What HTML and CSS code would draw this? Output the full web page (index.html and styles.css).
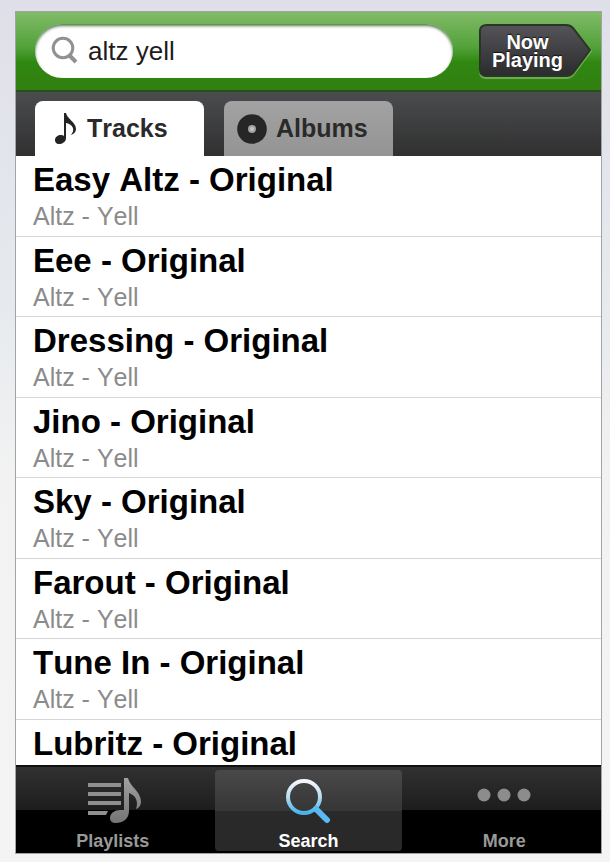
FILE: index.html
```html
<!DOCTYPE html>
<html lang="en">
<head>
  <meta charset="UTF-8">
  <meta name="viewport" content="width=device-width, initial-scale=1.0">
  <title>Search</title>
  <link rel="stylesheet" href="styles.css">
</head>
<body>
  <div class="phone">
    <header class="search-bar">
      <label class="search-box">
        <svg class="search-icon" width="28" height="30" viewBox="0 0 28 30" aria-hidden="true">
          <circle cx="12" cy="12" r="9.8" fill="none" stroke="#919191" stroke-width="3"/>
          <path d="M18.5 19.5L25 26" stroke="#919191" stroke-width="4"/>
        </svg>
        <input class="search-input" type="text" value="altz yell" aria-label="Search music">
      </label>
      <button class="now-playing" type="button">
        <svg class="now-shape" width="115" height="56" viewBox="0 0 115 56" aria-hidden="true">
          <defs>
            <linearGradient id="arrowFill" x1="0" y1="0" x2="0" y2="1">
              <stop offset="0" stop-color="#555459"/>
              <stop offset="1" stop-color="#2b2b2d"/>
            </linearGradient>
          </defs>
          <path d="M8 2H88Q93 2 96 5L113 27L96 50Q93 54 88 54H8Q2 54 2 48V8Q2 2 8 2Z" fill="none" stroke="#83bd6b" stroke-opacity=".7" stroke-width="2"/>
          <path d="M9 1H88Q92 1 95 4L112 26L95 49Q92 52 88 52H9Q2 52 2 46V7Q2 1 9 1Z" fill="url(#arrowFill)" stroke="#293626" stroke-width="2"/>
        </svg>
        <span class="now-text">Now<br>Playing</span>
      </button>
    </header>

    <div class="tabs">
      <button class="tab tab-active" type="button">
        <svg width="24" height="34" viewBox="0 0 24 34" aria-hidden="true">
          <path d="M10 1H12C13 7 22 10 22 17C22 20 20 22 17 23C22 17 18 12 12 11V26C12 30 8 32 5 32C2 32 1 30 1 28C1 25 4 23 7 23C8 23 9 23 10 24Z" fill="#242424"/>
        </svg>
        <span>Tracks</span>
      </button>
      <button class="tab" type="button">
        <svg width="30" height="30" viewBox="0 0 30 30" aria-hidden="true">
          <circle cx="15" cy="15" r="14.8" fill="#262626"/>
          <circle cx="15" cy="15" r="4" fill="#a2a2a2"/>
          <circle cx="15" cy="15" r="2" fill="#c4c4c4"/>
        </svg>
        <span>Albums</span>
      </button>
    </div>

    <ul class="tracks">
      <li class="track"><div class="title">Easy Altz - Original</div><div class="artist">Altz - Yell</div></li>
      <li class="track"><div class="title">Eee - Original</div><div class="artist">Altz - Yell</div></li>
      <li class="track"><div class="title">Dressing - Original</div><div class="artist">Altz - Yell</div></li>
      <li class="track"><div class="title">Jino - Original</div><div class="artist">Altz - Yell</div></li>
      <li class="track"><div class="title">Sky - Original</div><div class="artist">Altz - Yell</div></li>
      <li class="track"><div class="title">Farout - Original</div><div class="artist">Altz - Yell</div></li>
      <li class="track"><div class="title">Tune In - Original</div><div class="artist">Altz - Yell</div></li>
      <li class="track"><div class="title">Lubritz - Original</div></li>
    </ul>

    <nav class="nav">
      <button class="nav-item" type="button">
        <svg width="56" height="46" viewBox="0 0 56 46" aria-hidden="true">
          <defs>
            <linearGradient id="grayFill" x1="0" y1="0" x2="0" y2="1">
              <stop offset="0" stop-color="#a0a0a0"/>
              <stop offset="1" stop-color="#747474"/>
            </linearGradient>
          </defs>
          <path d="M3 5H36V9H3ZM3 14H36V18H3ZM3 23H36V27H3ZM3 33H23L21 37H3Z" fill="#8f8f8f"/>
          <path d="M39 0H43C45 9 56 13 56 24C56 27 54 30 51 31C54 23 50 17 44 15V33C44 41 38 45 31 45C27 45 25 43 25 40C25 35 30 32 35 32C37 32 38 32 39 32Z" fill="url(#grayFill)"/>
        </svg>
        <span>Playlists</span>
      </button>
      <button class="nav-item nav-active" type="button">
        <svg width="48" height="46" viewBox="0 0 48 46" aria-hidden="true">
          <defs>
            <linearGradient id="lensStroke" x1="0" y1="0" x2="0" y2="1">
              <stop offset="0" stop-color="#f4f7fb"/>
              <stop offset=".5" stop-color="#b9dcf1"/>
              <stop offset="1" stop-color="#45b4ea"/>
            </linearGradient>
          </defs>
          <circle cx="20" cy="19" r="16" fill="none" stroke="url(#lensStroke)" stroke-width="4"/>
          <path d="M32 31L43 42" stroke="#58baf0" stroke-width="6" stroke-linecap="round"/>
        </svg>
        <span>Search</span>
      </button>
      <button class="nav-item" type="button">
        <svg width="54" height="46" viewBox="0 0 54 46" aria-hidden="true">
          <circle cx="7" cy="17" r="6.5" fill="#8c8c8c"/>
          <circle cx="27" cy="17" r="6.5" fill="#8c8c8c"/>
          <circle cx="47" cy="17" r="6.5" fill="#8c8c8c"/>
        </svg>
        <span>More</span>
      </button>
    </nav>
  </div>
</body>
</html>
```
FILE: styles.css
```css
* {
  box-sizing: border-box;
}

body {
  margin: 0;
  min-height: 100vh;
  padding: 11px 8px 8px 15px;
  display: flex;
  font-family: "Liberation Sans", Arial, sans-serif;
  font-kerning: none;
  background: linear-gradient(#dfdfe9, #e6eaee 35%, #f2f2f2 55%, #f4f4f4);
}

button {
  margin: 0;
  padding: 0;
  border: 0;
  background: none;
  font: inherit;
  font-weight: bold;
  font-kerning: none;
}

.phone {
  flex: 1;
  min-width: 0;
  display: flex;
  flex-direction: column;
  border: 1px solid #a3a3a3;
  background: #fff;
}

.search-bar {
  display: flex;
  align-items: center;
  gap: 25px;
  height: 80px;
  padding: 0 8px 0 19px;
  border-bottom: 2px solid #24501a;
  background: linear-gradient(#82bb68, #52a239 45%, #2f8710 65%, #327f12);
}

.search-box {
  flex: 1;
  min-width: 0;
  display: flex;
  align-items: center;
  gap: 9px;
  height: 54px;
  padding: 0 16px;
  border-radius: 27px;
  background: #fff;
  box-shadow: inset 0 2px 3px #557b4a;
}

.search-icon {
  flex: none;
}

.search-input {
  flex: 1;
  min-width: 0;
  padding: 0;
  border: 0;
  outline: 0;
  background: none;
  font: inherit;
  font-size: 26px;
  color: #1c1c1c;
}

.now-playing {
  position: relative;
  width: 115px;
  height: 54px;
  color: #fff;
}

.now-shape {
  position: absolute;
  top: 0;
  left: 0;
}

.now-text {
  position: relative;
  display: block;
  padding-right: 16px;
  font-size: 20px;
  line-height: 18px;
  text-shadow: 0 -1px 1px #111;
}

.tabs {
  display: flex;
  align-items: flex-end;
  gap: 20px;
  height: 64px;
  padding: 0 19px;
  background: linear-gradient(#4b4c4f, #303030);
}

.tab {
  display: flex;
  align-items: center;
  gap: 9px;
  width: 169px;
  height: 55px;
  padding-left: 13px;
  border-radius: 8px 8px 0 0;
  background: linear-gradient(#a2a2a2, #949494);
  font-size: 25px;
  color: #2a2a2a;
}

.tab-active {
  padding-left: 19px;
  background: #fff;
}

.tracks {
  flex: 1;
  display: grid;
  grid-template-rows: repeat(7, 1fr) 45px;
  margin: 0;
  padding: 0;
  list-style: none;
}

.track {
  padding: 5px 17px 0;
  border-bottom: 1px solid #d6d6d6;
}

.track:last-child {
  border-bottom: 0;
}

.title {
  font-size: 33px;
  font-weight: bold;
  line-height: 38px;
  color: #000;
}

.artist {
  font-size: 25px;
  line-height: 35px;
  color: #8b8b8b;
}

.nav {
  display: grid;
  grid-template-columns: repeat(3, 1fr);
  gap: 8px;
  height: 88px;
  padding: 3px 3px 2px;
  border-top: 2px solid #111;
  background: linear-gradient(#313131, #1d1d1d 43px, #000 43px);
}

.nav-item {
  display: flex;
  flex-direction: column;
  align-items: center;
  padding-top: 8px;
  border-radius: 4px;
  font-size: 18px;
  line-height: 20px;
  color: #999;
}

.nav-item span {
  margin-top: 7px;
}

.nav-active {
  background: linear-gradient(#494949, #363636 41px, #292929 41px);
  color: #fff;
}
```
